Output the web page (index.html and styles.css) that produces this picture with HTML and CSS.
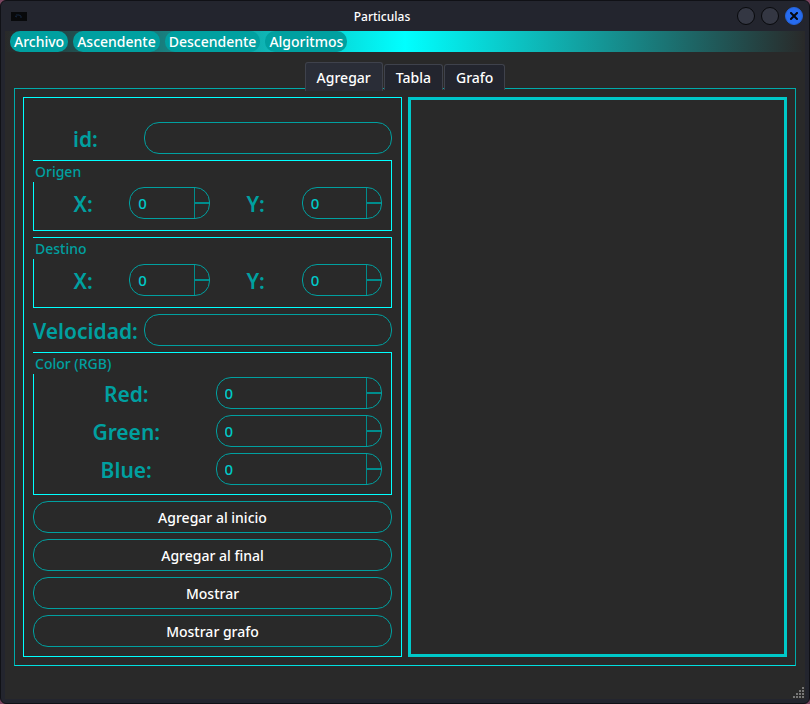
FILE: index.html
```html
<!DOCTYPE html>
<html lang="es">
<head>
<meta charset="utf-8">
<title>Particulas</title>
<link rel="stylesheet" href="styles.css">
</head>
<body>
<div class="window">
  <header class="titlebar">
    <svg class="app-icon" width="16" height="9" viewBox="0 0 16 9" aria-hidden="true">
      <rect width="16" height="9" fill="#08090b"/>
      <path d="M5 3h3l2 1v2M4 4l2 1" fill="none" stroke="#14263f"/>
    </svg>
    <h1 class="title">Particulas</h1>
    <div class="window-buttons">
      <button class="round" type="button" aria-label="Minimizar"></button>
      <button class="round" type="button" aria-label="Maximizar"></button>
      <button class="round close" type="button" aria-label="Cerrar">
        <svg width="8" height="8" viewBox="0 0 8 8"><path d="M1 1l6 6M7 1l-6 6" stroke="#06080f" stroke-width="2" stroke-linecap="square"/></svg>
      </button>
    </div>
  </header>
  <div class="client">
    <nav class="menubar">
      <button type="button">Archivo</button>
      <button type="button">Ascendente</button>
      <button type="button">Descendente</button>
      <button type="button">Algoritmos</button>
    </nav>
    <main class="main">
      <div class="tabs" role="tablist">
        <button class="tab active" type="button" role="tab" aria-selected="true">Agregar</button>
        <button class="tab" type="button" role="tab" aria-selected="false">Tabla</button>
        <button class="tab" type="button" role="tab" aria-selected="false">Grafo</button>
      </div>
      <div class="page">
        <form class="form">
          <label class="name" for="pid">id:</label>
          <input class="line" id="pid" type="text">
          <fieldset class="group">
            <legend>Origen</legend>
            <div class="fields four">
              <label class="name" for="ox">X:</label>
              <div class="spin"><input id="ox" type="number" value="0"><span class="steps"><button type="button" aria-label="Más"></button><button type="button" aria-label="Menos"></button></span></div>
              <label class="name" for="oy">Y:</label>
              <div class="spin"><input id="oy" type="number" value="0"><span class="steps"><button type="button" aria-label="Más"></button><button type="button" aria-label="Menos"></button></span></div>
            </div>
          </fieldset>
          <fieldset class="group">
            <legend>Destino</legend>
            <div class="fields four">
              <label class="name" for="dx">X:</label>
              <div class="spin"><input id="dx" type="number" value="0"><span class="steps"><button type="button" aria-label="Más"></button><button type="button" aria-label="Menos"></button></span></div>
              <label class="name" for="dy">Y:</label>
              <div class="spin"><input id="dy" type="number" value="0"><span class="steps"><button type="button" aria-label="Más"></button><button type="button" aria-label="Menos"></button></span></div>
            </div>
          </fieldset>
          <label class="name" for="vel">Velocidad:</label>
          <input class="line" id="vel" type="text">
          <fieldset class="group">
            <legend>Color (RGB)</legend>
            <div class="fields two">
              <label class="name" for="red">Red:</label>
              <div class="spin"><input id="red" type="number" value="0"><span class="steps"><button type="button" aria-label="Más"></button><button type="button" aria-label="Menos"></button></span></div>
              <label class="name" for="green">Green:</label>
              <div class="spin"><input id="green" type="number" value="0"><span class="steps"><button type="button" aria-label="Más"></button><button type="button" aria-label="Menos"></button></span></div>
              <label class="name" for="blue">Blue:</label>
              <div class="spin"><input id="blue" type="number" value="0"><span class="steps"><button type="button" aria-label="Más"></button><button type="button" aria-label="Menos"></button></span></div>
            </div>
          </fieldset>
          <button class="action" type="button">Agregar al inicio</button>
          <button class="action" type="button">Agregar al final</button>
          <button class="action" type="button">Mostrar</button>
          <button class="action" type="button">Mostrar grafo</button>
        </form>
        <section class="output" aria-label="Salida"></section>
      </div>
    </main>
    <footer class="statusbar">
      <svg width="11" height="11" viewBox="0 0 11 11" fill="#777" aria-hidden="true">
        <path d="M9 0h2v2h-2zM6 3h2v2h-2zM9 3h2v2h-2zM3 6h2v2h-2zM6 6h2v2h-2zM9 6h2v2h-2zM0 9h2v2h-2zM3 9h2v2h-2zM6 9h2v2h-2zM9 9h2v2h-2z"/>
      </svg>
    </footer>
  </div>
</div>
</body>
</html>
```
FILE: styles.css
```css
* { box-sizing: border-box; }

body {
  margin: 0;
  background: #7a4560;
  color: #fff;
  font: 500 14px/21px "Noto Sans", sans-serif;
}

button, input {
  margin: 0;
  padding: 0;
  border: 0;
  background: none;
  color: inherit;
  font: inherit;
}

.window {
  display: flex;
  flex-direction: column;
  min-height: 100vh;
  padding: 0 4px 4px;
  border: 1px solid #101116;
  border-radius: 6px;
  background: #23252e;
}

.titlebar {
  display: flex;
  justify-content: space-between;
  align-items: center;
  height: 30px;
  padding: 0 2px 0 6px;
}

.title {
  margin: 0;
  font-size: 12px;
  font-weight: 500;
}

.window-buttons {
  display: flex;
  justify-content: flex-end;
  gap: 6px;
}

.round {
  display: grid;
  place-items: center;
  width: 18px;
  height: 18px;
  border: 1px solid #08090c;
  border-radius: 50%;
  background: #343743;
}

.close {
  border-color: #2463d8;
  background: #276cf0;
}

.client {
  flex: 1;
  display: flex;
  flex-direction: column;
  background: #292929;
}

.menubar {
  display: flex;
  gap: 5px;
  padding: 0 5px;
  background: linear-gradient(90deg, #292929, #00ffff 50%, #292929);
}

.menubar button {
  padding: 0 4px;
  border-radius: 10px;
  background: #00a0a0;
}

.main {
  flex: 1;
  display: flex;
  flex-direction: column;
  padding: 10px 9px 0;
}

.tabs {
  position: relative;
  display: flex;
  justify-content: center;
  align-items: flex-end;
  gap: 1px;
  margin-bottom: -3px;
}

.tab {
  height: 26px;
  margin-bottom: 1px;
  padding: 0 11px;
  border: 1px solid #3f424c;
  border-bottom: 0;
  border-radius: 3px 3px 0 0;
  background: #23252e;
}

.active {
  height: 29px;
  margin-bottom: 0;
  background: #2a2d37;
}

.page {
  flex: 1;
  display: grid;
  grid-template-columns: 1fr 1fr;
  gap: 6px;
  padding: 8px;
  border: 1px solid #00aaaa;
  border-bottom-color: #00e0e0;
}

.form {
  display: grid;
  grid-template-columns: max-content 1fr;
  align-content: start;
  gap: 6px;
  padding: 24px 9px 9px;
  border: 1px solid #00ffff;
}

.output { border: 3px solid #00c8c8; }

.name {
  padding-top: 2px;
  color: #00a0a0;
  font-size: 21px;
  font-weight: 600;
  line-height: 30px;
  text-align: center;
}

.line, .action, .spin {
  width: 100%;
  min-width: 0;
  height: 32px;
  border: 1px solid #00a0a0;
  border-radius: 15px;
}

.line { padding: 0 12px; }

.group {
  grid-column: 1 / -1;
  min-width: 0;
  margin: 0;
  padding: 0;
  border: 1px solid #00ffff;
}

.group legend {
  float: left;
  margin-left: -1px;
  padding: 0 2px;
  background: #292929;
  color: #00a0a0;
}

.fields {
  clear: both;
  display: grid;
  gap: 6px;
  padding: 5px 9px 11px;
}

.four { grid-template-columns: repeat(4, 1fr); }

.two {
  grid-template-columns: 1fr 1fr;
  padding: 3px 9px 9px;
}

.spin {
  display: flex;
  overflow: hidden;
  color: #00c8c8;
  font-size: 15px;
}

.spin input {
  flex: 1;
  min-width: 0;
  padding-left: 8px;
  appearance: textfield;
}

.spin input::-webkit-inner-spin-button { appearance: none; }

.steps {
  display: flex;
  flex-direction: column;
  width: 15px;
  border-left: 1px solid #008c8c;
}

.steps button { flex: 1; }
.steps button + button { border-top: 2px solid #008c8c; }

.action {
  grid-column: 1 / -1;
}

.statusbar {
  display: flex;
  justify-content: flex-end;
  align-items: flex-end;
  height: 33px;
  padding: 0 1px 1px;
}
```
